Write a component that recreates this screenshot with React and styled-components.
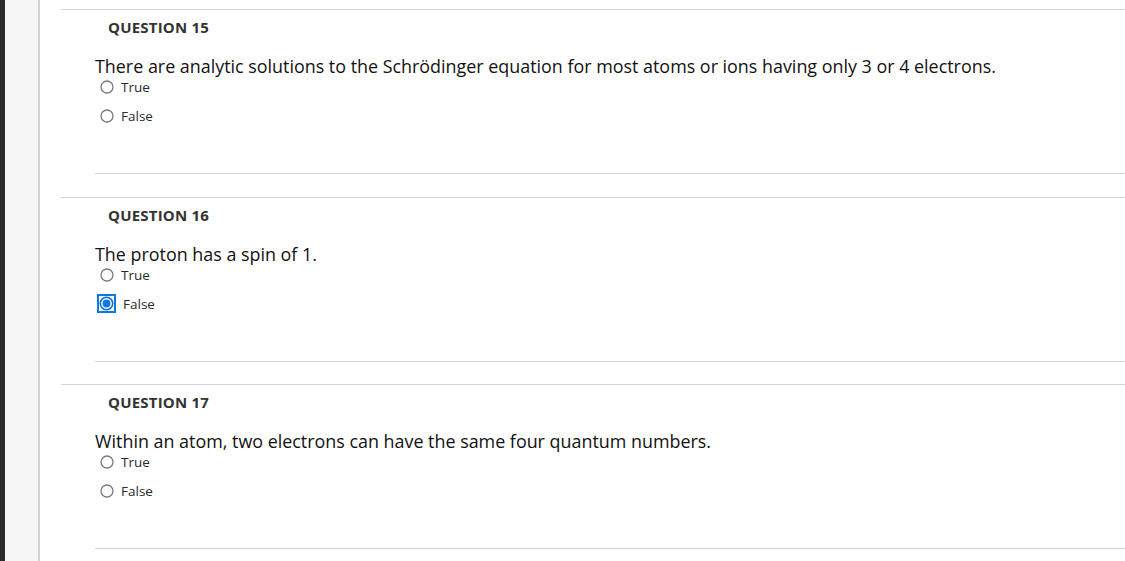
import React from 'react';
import styled, { createGlobalStyle } from 'styled-components';

const questions = [
  {
    number: 15,
    text: 'There are analytic solutions to the Schrödinger equation for most atoms or ions having only 3 or 4 electrons.',
    selected: null,
  },
  {
    number: 16,
    text: 'The proton has a spin of 1.',
    selected: 'False',
  },
  {
    number: 17,
    text: 'Within an atom, two electrons can have the same four quantum numbers.',
    selected: null,
  },
];

function Radio({ checked }) {
  if (checked) {
    return (
      <FocusBox>
        <svg width="15" height="15" viewBox="0 0 15 15">
          <circle cx="7.5" cy="7.5" r="6.2" fill="#fff" stroke="#0a6fdc" strokeWidth="1.6" />
          <circle cx="7.5" cy="7.5" r="3.9" fill="#0a78e6" />
        </svg>
      </FocusBox>
    );
  }
  return (
    <RadioSlot>
      <svg width="14" height="14" viewBox="0 0 14 14">
        <circle cx="7" cy="7" r="6" fill="#fff" stroke="#7a7a7a" strokeWidth="1.3" />
      </svg>
    </RadioSlot>
  );
}

function Question({ number, text, selected }) {
  return (
    <Block>
      <Header>QUESTION {number}</Header>
      <Body>
        <Prompt>{text}</Prompt>
        <Options>
          {['True', 'False'].map((label) => (
            <Option key={label}>
              <Radio checked={selected === label} />
              <Label>{label}</Label>
            </Option>
          ))}
        </Options>
        <Separator />
      </Body>
    </Block>
  );
}

export default function App() {
  return (
    <>
      <GlobalStyle />
      <Page>
        <Rail />
        <Sidebar />
        <Main>
          {questions.map((q) => (
            <Question key={q.number} {...q} />
          ))}
        </Main>
      </Page>
    </>
  );
}

const GlobalStyle = createGlobalStyle`
  html, body {
    margin: 0;
    padding: 0;
    background: #fff;
    font-family: 'Open Sans', 'Noto Sans', sans-serif;
  }
`;

const Page = styled.div`
  display: flex;
  width: 1125px;
  height: 561px;
  overflow: hidden;
`;

const Rail = styled.div`
  width: 5px;
  flex-shrink: 0;
  background: #2b2b2b;
`;

const Sidebar = styled.div`
  width: 33px;
  flex-shrink: 0;
  background: #f6f6f6;
  border-right: 2px solid #d2d2d2;
`;

const Main = styled.main`
  flex: 1;
  padding: 9px 0 0 21px;
`;

const Block = styled.section`
  border-top: 1px solid #d3d3d3;
  margin-bottom: 22.5px;
`;

const Header = styled.h3`
  margin: 7px 0 0 47px;
  font-size: 15px;
  font-weight: 700;
  line-height: 20px;
  color: #333;
  letter-spacing: 0.2px;
`;

const Body = styled.div`
  margin-left: 34px;
`;

const Prompt = styled.p`
  margin: 18px 0 0;
  font-size: 17.9px;
  line-height: 23px;
  color: #111;
`;

const Options = styled.div`
  display: flex;
  flex-direction: column;
  gap: 11px;
  padding-left: 5px;
`;

const Option = styled.label`
  display: flex;
  align-items: center;
  height: 18px;
  gap: 7px;
`;

const RadioSlot = styled.span`
  display: flex;
  width: 14px;
  height: 14px;
`;

const FocusBox = styled.span`
  display: flex;
  align-items: center;
  justify-content: center;
  width: 15px;
  height: 15px;
  margin: -3px 0 -3px -3px;
  border: 2px solid #0a78e6;
  background: #fff;
`;

const Label = styled.span`
  font-size: 13.5px;
  color: #2a2a30;
`;

const Separator = styled.hr`
  margin: 48px 0 0;
  border: 0;
  border-top: 1px solid #d3d3d3;
`;
